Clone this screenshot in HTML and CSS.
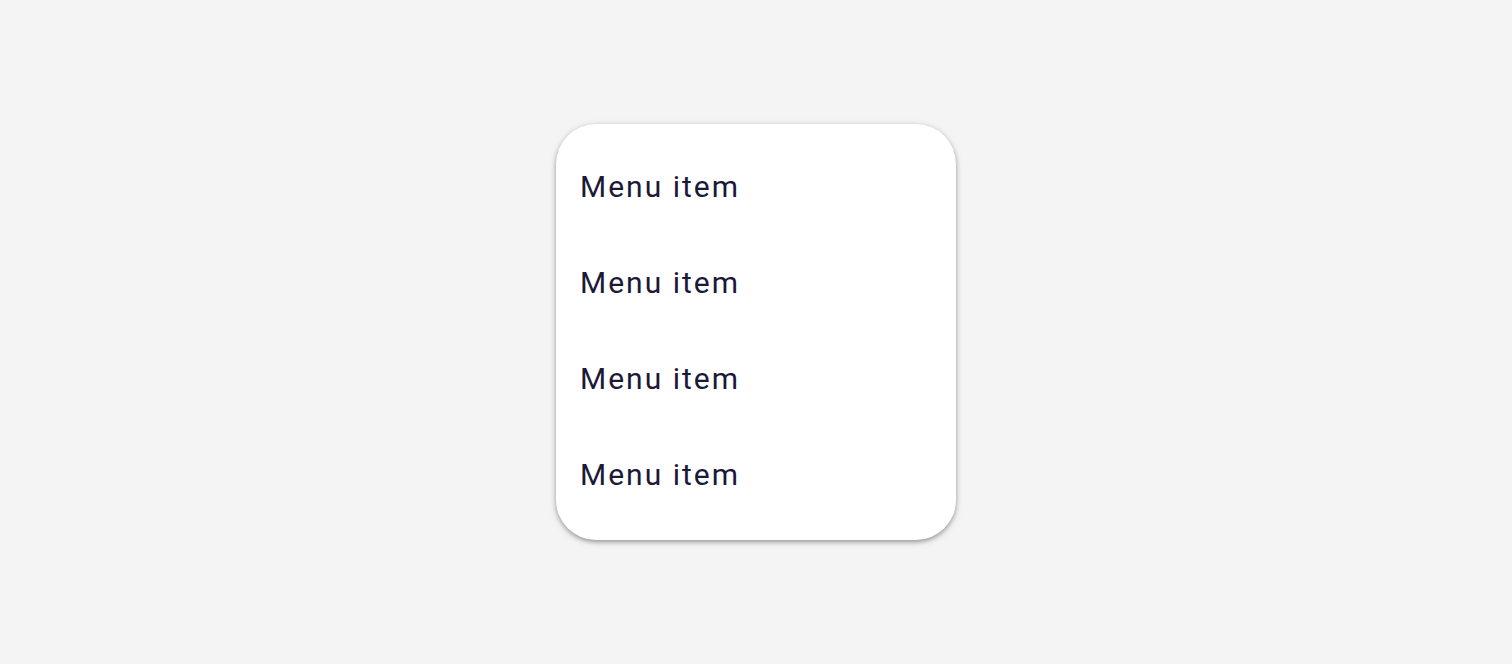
FILE: index.html
```html
<!DOCTYPE html>
<html lang="en">
<head>
    <meta charset="UTF-8">
    <meta name="viewport" content="width=device-width, initial-scale=1.0">
    <title>Menu</title>
    <link rel="stylesheet" href="styles.css">
</head>
<body>

    <div class="menu">
        <div class="menu-item">Menu item</div>
        <div class="menu-item">Menu item</div>
        <div class="menu-item">Menu item</div>
        <div class="menu-item">Menu item</div>
    </div>

</body>
</html>
```

FILE: styles.css
```css
body {
    margin: 0;
    height: 664px;
    background: #f4f4f4;
    font-family: 'Roboto', sans-serif;
    display: flex;
    align-items: center;
    justify-content: center;
}

.menu {
    width: 400px;
    padding: 16px 0;
    background: white;
    border-radius: 40px;
    box-shadow: 0 2px 4px rgba(0, 0, 0, 0.3), 0 2px 8px rgba(0, 0, 0, 0.12);
}

.menu-item {
    height: 96px;
    display: flex;
    align-items: center;
    padding: 0 24px 4px;
    box-sizing: border-box;
    font-size: 30px;
    letter-spacing: 2px;
    color: #1c1838;
}
```
